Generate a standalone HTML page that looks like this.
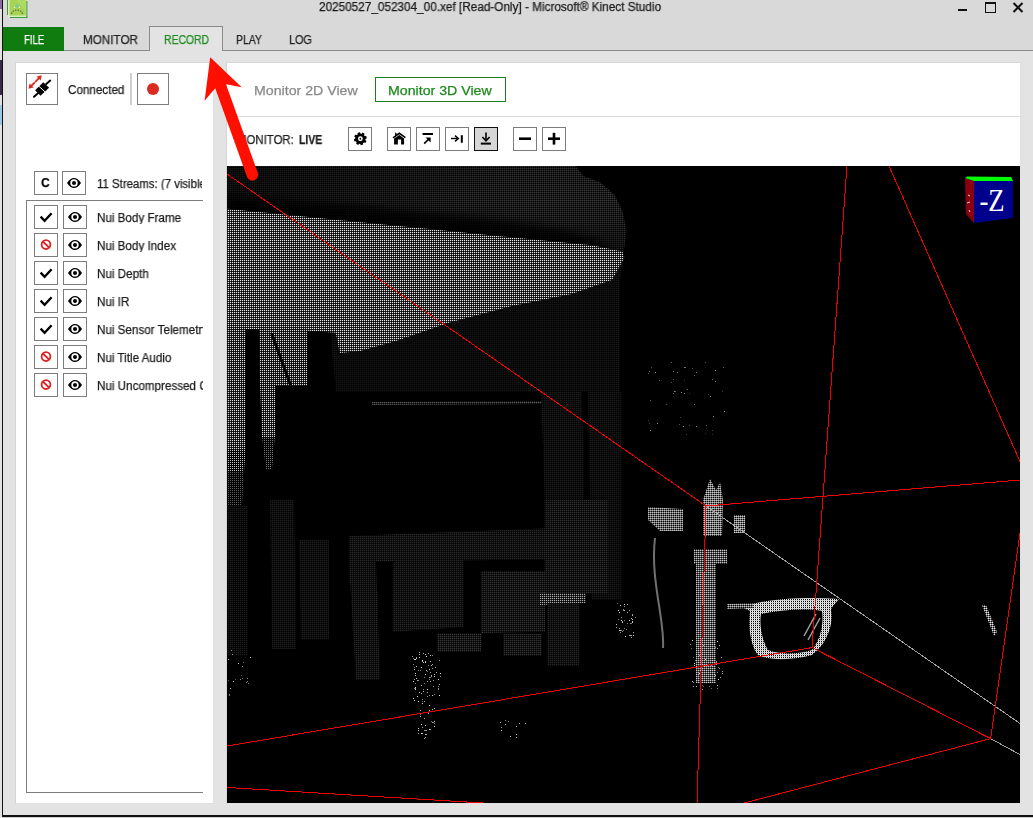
<!DOCTYPE html>
<html><head><meta charset="utf-8">
<style>
*{margin:0;padding:0;box-sizing:border-box}
html,body{width:1033px;height:818px;overflow:hidden;background:#d9d9d9;font-family:"Liberation Sans",sans-serif;position:relative;color:#1b1b1b}
.a{position:absolute}
.t{position:absolute;white-space:nowrap;transform-origin:0 0;line-height:1;will-change:transform;-webkit-text-stroke:0.25px currentColor}
.bx{position:absolute;width:24px;height:24px;border:1px solid #7d7d7d;background:#fff}
</style></head><body>
<!-- desktop strip at far left -->
<div class="a" style="left:0;top:0;width:2px;height:818px;background:#e2e2e2"></div>
<div class="a" style="left:0;top:0;width:2px;height:9px;background:#8a6a9a"></div>
<div class="a" style="left:0;top:60px;width:2px;height:35px;background:#3a2a4a"></div>
<div class="a" style="left:0;top:105px;width:2px;height:20px;background:#9cc8e4"></div>
<!-- window border -->
<div class="a" style="left:2px;top:0;width:1px;height:816px;background:#111"></div>
<div class="a" style="left:2px;top:815px;width:1031px;height:2px;background:#111"></div>
<div class="a" style="left:3px;top:817px;width:1030px;height:1px;background:#d0d0d0"></div>

<!-- app icon -->
<svg class="a" style="left:4px;top:0" width="26" height="20" viewBox="0 0 26 20">
<rect x="3" y="-1" width="1.2" height="16" fill="#3e9a3a"/>
<rect x="22.2" y="1" width="1.2" height="17" fill="#3e9a3a"/>
<rect x="6" y="16.8" width="17.4" height="1.2" fill="#3e9a3a"/>
<rect x="4.2" y="-1" width="18" height="17.8" fill="#e6f4c8"/>
<rect x="5.4" y="-1" width="16.4" height="16.6" fill="#a5d456"/>
<path d="M12 -1 L21.8 -1 L21.8 12 Z" fill="#b6dc6c" opacity="0.6"/>
<circle cx="13" cy="5.8" r="1.2" fill="none" stroke="#5ac8c8" stroke-width="0.9"/>
<circle cx="10.4" cy="7.4" r="0.6" fill="#f0fff0"/><circle cx="15.5" cy="7.4" r="0.6" fill="#f0fff0"/>
<path d="M7.5 14 C8 11 10.5 10.2 13 10.2 C15.5 10.2 18 11 18.6 14" stroke="#6a6a3a" stroke-width="1.3" fill="none" stroke-dasharray="1.4 1.2"/>
</svg>

<!-- title -->
<div class="t" id="title" style="left:318.5px;top:1px;font-size:12px;color:#1a1a1a;transform:scaleX(0.98)">20250527_052304_00.xef [Read-Only] - Microsoft® Kinect Studio</div>

<!-- window controls -->
<div class="a" style="left:958px;top:9px;width:9px;height:2px;background:#111"></div>
<div class="a" style="left:985px;top:2px;width:11px;height:11px;border:1.5px solid #111;border-top-width:2.5px"></div>
<svg class="a" style="left:1012px;top:2px" width="12" height="11" viewBox="0 0 12 11"><path d="M1.5 1 L10.5 10 M10.5 1 L1.5 10" stroke="#111" stroke-width="2" fill="none"/></svg>

<!-- tabs -->
<div class="a" style="left:3px;top:50px;width:1030px;height:1px;background:#8a8a8a"></div>
<div class="a" style="left:3px;top:27px;width:61px;height:24px;background:#107c10"></div>
<div class="a" style="left:149px;top:26px;width:74px;height:25px;background:#e3e3e3;border:1px solid #8a8a8a;border-bottom:none"></div>
<div class="t" id="tfile" style="left:23.5px;top:34.2px;font-size:12px;color:#fff;transform:scaleX(0.8)">FILE</div>
<div class="t" id="tmon" style="left:82.6px;top:34.2px;font-size:12px;color:#222;transform:scaleX(0.973)">MONITOR</div>
<div class="t" id="trec" style="left:163.7px;top:34.2px;font-size:12px;color:#1e8a1e;transform:scaleX(0.867)">RECORD</div>
<div class="t" id="tplay" style="left:235.9px;top:34.2px;font-size:12px;color:#222;transform:scaleX(0.87)">PLAY</div>
<div class="t" id="tlog" style="left:288.9px;top:34.2px;font-size:12px;color:#222;transform:scaleX(0.9)">LOG</div>

<!-- content background -->
<div class="a" style="left:3px;top:51px;width:1030px;height:764px;background:#e3e3e3"></div>

<!-- left panel -->
<div class="a" style="left:15px;top:62px;width:199px;height:742px;background:#fff;border:1px solid #d6d6d6;border-right-color:#e0e0e0;border-bottom-color:#e0e0e0"></div>
<div class="a" style="left:26px;top:73px;width:32px;height:32px;border:1px solid #7d7d7d"></div>
<div class="t" id="tconn" style="left:68px;top:84.2px;font-size:12px;transform:scaleX(0.972)">Connected</div>
<div class="a" style="left:130px;top:73px;width:2px;height:32px;background:#cfcfcf"></div>
<div class="a" style="left:137px;top:73px;width:32px;height:32px;border:1px solid #7d7d7d"></div>
<div class="a" style="left:147px;top:83px;width:12px;height:12px;border-radius:50%;background:#dc2a20"></div>

<div class="bx" style="left:34px;top:171px"><div class="t" style="left:6.3px;top:4.2px;font-size:13.5px;font-weight:bold;color:#000;transform:scaleX(0.9)">C</div></div>
<div class="bx" style="left:62px;top:171px"><svg width="24" height="24" class="a" style="left:-1px;top:-1px"><path d="M5 11.9 C7.3 8.6 9.4 6.9 12 6.9 C14.6 6.9 16.7 8.6 19 11.9 C16.7 15.2 14.6 16.9 12 16.9 C9.4 16.9 7.3 15.2 5 11.9Z" fill="#000"/><circle cx="12" cy="11.9" r="3.7" fill="#fff"/><circle cx="12" cy="11.9" r="2" fill="#000"/></svg></div>
<div class="t" id="tstreams" style="left:97px;top:178.3px;font-size:12px;width:111px;overflow:hidden;transform:scaleX(0.95)">11 Streams: (7 visible)</div>

<!-- list box -->
<div class="a" style="left:26px;top:200px;width:177px;height:593px;border:1px solid #7d7d7d;border-right:none"></div>

<div class="bx" style="left:34px;top:205px"><svg width="24" height="24" class="a" style="left:-1px;top:-1px"><path d="M6.6 11.6 L10.6 15.8 L17.6 8.2" stroke="#000" stroke-width="2.3" fill="none" stroke-linecap="butt"/></svg></div>
<div class="bx" style="left:63px;top:205px"><svg width="24" height="24" class="a" style="left:-1px;top:-1px"><path d="M5 11.9 C7.3 8.6 9.4 6.9 12 6.9 C14.6 6.9 16.7 8.6 19 11.9 C16.7 15.2 14.6 16.9 12 16.9 C9.4 16.9 7.3 15.2 5 11.9Z" fill="#000"/><circle cx="12" cy="11.9" r="3.7" fill="#fff"/><circle cx="12" cy="11.9" r="2" fill="#000"/></svg></div>
<div class="t rl" id="r0" style="left:97px;top:212px;font-size:12px;width:109px;overflow:hidden;transform:scaleX(0.97)">Nui Body Frame</div>
<div class="bx" style="left:34px;top:233px"><svg width="24" height="24" class="a" style="left:-1px;top:-1px"><circle cx="12" cy="11.6" r="4.4" stroke="#dc2424" stroke-width="1.8" fill="none"/><path d="M8.9 8.5 L15.1 14.7" stroke="#dc2424" stroke-width="1.8"/></svg></div>
<div class="bx" style="left:63px;top:233px"><svg width="24" height="24" class="a" style="left:-1px;top:-1px"><path d="M5 11.9 C7.3 8.6 9.4 6.9 12 6.9 C14.6 6.9 16.7 8.6 19 11.9 C16.7 15.2 14.6 16.9 12 16.9 C9.4 16.9 7.3 15.2 5 11.9Z" fill="#000"/><circle cx="12" cy="11.9" r="3.7" fill="#fff"/><circle cx="12" cy="11.9" r="2" fill="#000"/></svg></div>
<div class="t rl" id="r1" style="left:97px;top:240px;font-size:12px;width:109px;overflow:hidden;transform:scaleX(0.97)">Nui Body Index</div>
<div class="bx" style="left:34px;top:261px"><svg width="24" height="24" class="a" style="left:-1px;top:-1px"><path d="M6.6 11.6 L10.6 15.8 L17.6 8.2" stroke="#000" stroke-width="2.3" fill="none" stroke-linecap="butt"/></svg></div>
<div class="bx" style="left:63px;top:261px"><svg width="24" height="24" class="a" style="left:-1px;top:-1px"><path d="M5 11.9 C7.3 8.6 9.4 6.9 12 6.9 C14.6 6.9 16.7 8.6 19 11.9 C16.7 15.2 14.6 16.9 12 16.9 C9.4 16.9 7.3 15.2 5 11.9Z" fill="#000"/><circle cx="12" cy="11.9" r="3.7" fill="#fff"/><circle cx="12" cy="11.9" r="2" fill="#000"/></svg></div>
<div class="t rl" id="r2" style="left:97px;top:268px;font-size:12px;width:109px;overflow:hidden;transform:scaleX(0.97)">Nui Depth</div>
<div class="bx" style="left:34px;top:289px"><svg width="24" height="24" class="a" style="left:-1px;top:-1px"><path d="M6.6 11.6 L10.6 15.8 L17.6 8.2" stroke="#000" stroke-width="2.3" fill="none" stroke-linecap="butt"/></svg></div>
<div class="bx" style="left:63px;top:289px"><svg width="24" height="24" class="a" style="left:-1px;top:-1px"><path d="M5 11.9 C7.3 8.6 9.4 6.9 12 6.9 C14.6 6.9 16.7 8.6 19 11.9 C16.7 15.2 14.6 16.9 12 16.9 C9.4 16.9 7.3 15.2 5 11.9Z" fill="#000"/><circle cx="12" cy="11.9" r="3.7" fill="#fff"/><circle cx="12" cy="11.9" r="2" fill="#000"/></svg></div>
<div class="t rl" id="r3" style="left:97px;top:296px;font-size:12px;width:109px;overflow:hidden;transform:scaleX(0.97)">Nui IR</div>
<div class="bx" style="left:34px;top:317px"><svg width="24" height="24" class="a" style="left:-1px;top:-1px"><path d="M6.6 11.6 L10.6 15.8 L17.6 8.2" stroke="#000" stroke-width="2.3" fill="none" stroke-linecap="butt"/></svg></div>
<div class="bx" style="left:63px;top:317px"><svg width="24" height="24" class="a" style="left:-1px;top:-1px"><path d="M5 11.9 C7.3 8.6 9.4 6.9 12 6.9 C14.6 6.9 16.7 8.6 19 11.9 C16.7 15.2 14.6 16.9 12 16.9 C9.4 16.9 7.3 15.2 5 11.9Z" fill="#000"/><circle cx="12" cy="11.9" r="3.7" fill="#fff"/><circle cx="12" cy="11.9" r="2" fill="#000"/></svg></div>
<div class="t rl" id="r4" style="left:97px;top:324px;font-size:12px;width:109px;overflow:hidden;transform:scaleX(0.97)">Nui Sensor Telemetry</div>
<div class="bx" style="left:34px;top:345px"><svg width="24" height="24" class="a" style="left:-1px;top:-1px"><circle cx="12" cy="11.6" r="4.4" stroke="#dc2424" stroke-width="1.8" fill="none"/><path d="M8.9 8.5 L15.1 14.7" stroke="#dc2424" stroke-width="1.8"/></svg></div>
<div class="bx" style="left:63px;top:345px"><svg width="24" height="24" class="a" style="left:-1px;top:-1px"><path d="M5 11.9 C7.3 8.6 9.4 6.9 12 6.9 C14.6 6.9 16.7 8.6 19 11.9 C16.7 15.2 14.6 16.9 12 16.9 C9.4 16.9 7.3 15.2 5 11.9Z" fill="#000"/><circle cx="12" cy="11.9" r="3.7" fill="#fff"/><circle cx="12" cy="11.9" r="2" fill="#000"/></svg></div>
<div class="t rl" id="r5" style="left:97px;top:352px;font-size:12px;width:109px;overflow:hidden;transform:scaleX(0.97)">Nui Title Audio</div>
<div class="bx" style="left:34px;top:373px"><svg width="24" height="24" class="a" style="left:-1px;top:-1px"><circle cx="12" cy="11.6" r="4.4" stroke="#dc2424" stroke-width="1.8" fill="none"/><path d="M8.9 8.5 L15.1 14.7" stroke="#dc2424" stroke-width="1.8"/></svg></div>
<div class="bx" style="left:63px;top:373px"><svg width="24" height="24" class="a" style="left:-1px;top:-1px"><path d="M5 11.9 C7.3 8.6 9.4 6.9 12 6.9 C14.6 6.9 16.7 8.6 19 11.9 C16.7 15.2 14.6 16.9 12 16.9 C9.4 16.9 7.3 15.2 5 11.9Z" fill="#000"/><circle cx="12" cy="11.9" r="3.7" fill="#fff"/><circle cx="12" cy="11.9" r="2" fill="#000"/></svg></div>
<div class="t rl" id="r6" style="left:97px;top:380px;font-size:12px;width:109px;overflow:hidden;transform:scaleX(0.97)">Nui Uncompressed Color</div>

<!-- right panel -->
<div class="a" style="left:226px;top:62px;width:795px;height:742px;background:#fff;border:1px solid #d6d6d6;border-right-color:#e0e0e0;border-bottom-color:#e0e0e0"></div>
<div class="a" style="left:227px;top:116px;width:793px;height:1px;background:#dcdcdc"></div>
<div class="t" id="t2d" style="left:253.7px;top:84px;font-size:13.5px;color:#8a8a8a;transform:scaleX(1.05)">Monitor 2D View</div>
<div class="a" style="left:375px;top:77px;width:131px;height:25px;border:1px solid #1e7e1e"></div>
<div class="t" id="t3d" style="left:387.8px;top:84px;font-size:13.5px;color:#1e8a1e;transform:scaleX(1.05)">Monitor 3D View</div>
<div class="t" id="tmonl" style="left:237.1px;top:134.1px;font-size:12px;transform:scaleX(0.95)">MONITOR:</div>
<div class="t" id="tlive" style="left:299px;top:134.1px;font-size:12px;font-weight:bold;transform:scaleX(0.867)">LIVE</div>

<div class="bx" style="left:348px;top:127px"><svg width="24" height="24" class="a" style="left:-1px;top:-1px"><path d="M16.52 9.18 L18.20 8.91 L18.83 11.28 L17.25 11.89 L17.12 12.88 L18.49 13.88 L17.26 16.00 L15.72 15.31 L14.92 15.92 L15.19 17.60 L12.82 18.23 L12.21 16.65 L11.22 16.52 L10.22 17.89 L8.10 16.66 L8.79 15.12 L8.18 14.32 L6.50 14.59 L5.87 12.22 L7.45 11.61 L7.58 10.62 L6.21 9.62 L7.44 7.50 L8.98 8.19 L9.78 7.58 L9.51 5.90 L11.88 5.27 L12.49 6.85 L13.48 6.98 L14.48 5.61 L16.60 6.84 L15.91 8.38Z" fill="#000"/><circle cx="12.35" cy="11.75" r="5.0" fill="#000"/><circle cx="12.35" cy="11.75" r="2.4" fill="#fff"/><circle cx="12.35" cy="11.75" r="0.9" fill="#000"/></svg></div>
<div class="bx" style="left:387px;top:127px"><svg width="24" height="24" class="a" style="left:-1px;top:-1px"><path d="M6.0 10.9 L12.35 6.3 L18.4 10.7" stroke="#000" stroke-width="1.5" fill="none"/><path d="M8.1 5.6 L9.6 6.2 L9.6 8.2 L8.1 9.2 Z" fill="#000"/><path d="M7.1 11.6 L12.35 8.0 L17.1 11.4 L17.1 17.4 L14.1 17.4 L14.1 12.4 L10.9 12.4 L10.9 17.4 L7.1 17.4 Z" fill="#000"/></svg></div>
<div class="bx" style="left:416px;top:127px"><svg width="24" height="24" class="a" style="left:-1px;top:-1px"><rect x="6.6" y="6.0" width="10.4" height="2.0" fill="#000"/><path d="M8.2 16.6 L13.2 11.6" stroke="#000" stroke-width="1.6"/><path d="M9.6 10.4 L14.6 10.4 L14.6 15.4 Z" fill="#000"/></svg></div>
<div class="bx" style="left:445px;top:127px"><svg width="24" height="24" class="a" style="left:-1px;top:-1px"><path d="M6 11.5 L12.6 11.5" stroke="#000" stroke-width="1.4"/><path d="M10.0 8.6 L13.4 11.5 L10.0 14.4" stroke="#000" stroke-width="1.4" fill="none"/><rect x="15.8" y="8.2" width="2" height="7.6" fill="#000"/></svg></div>
<div class="bx" style="left:474px;top:127px;background:#d6d6d6;border:1.5px solid #111"><svg width="24" height="24" class="a" style="left:-1.5px;top:-1.5px"><path d="M12 5.4 L12 12.8" stroke="#000" stroke-width="1.6"/><path d="M8.4 10.0 L12 13.8 L15.6 10.0" stroke="#000" stroke-width="1.6" fill="none"/><rect x="6.8" y="15.6" width="10.2" height="2.0" fill="#000"/></svg></div>
<div class="bx" style="left:513px;top:127px"><svg width="24" height="24" class="a" style="left:-1px;top:-1px"><rect x="6" y="10.4" width="12" height="2.6" fill="#000"/></svg></div>
<div class="bx" style="left:542px;top:127px"><svg width="24" height="24" class="a" style="left:-1px;top:-1px"><rect x="6" y="10.4" width="12" height="2.6" fill="#000"/><rect x="10.7" y="5.8" width="2.6" height="11.8" fill="#000"/></svg></div>

<svg class="a" style="left:0;top:0" width="1033" height="818" viewBox="0 0 1033 818" pointer-events="none">
<g fill="#000" stroke="none">
<path d="M43.3 82.3 L49.1 87.7 L40.5 95.8 L35.1 90.2 Z"/>
</g>
<path d="M38.6 86.0 L45.4 92.2" stroke="#fff" stroke-width="1"/>
<path d="M46.0 84.2 L50.2 80.6 M38.2 93.0 L34.0 96.8" stroke="#000" stroke-width="2" stroke-linecap="round"/>
<path d="M30.8 86.4 L34.2 83.0 M35.6 81.6 L39.0 78.2" stroke="#dc2a20" stroke-width="1.8" stroke-linecap="round"/>
<path d="M28.4 88.8 L29.6 83.6 L33.6 87.6 Z M41.8 75.3 L36.6 76.5 L40.6 80.5 Z" fill="#dc2a20"/>
</svg>
<!-- viewport -->
<div class="a" style="left:227px;top:166px;width:793px;height:637px;background:#000;overflow:hidden">
<svg id="vp" width="793" height="637" viewBox="227 166 793 637" style="display:block">
<!--VP-->
<defs><pattern id="p28_62" width="2" height="2" patternUnits="userSpaceOnUse"><rect x="0" y="0" width="1" height="1" fill="#3e3e3e"/><rect x="1" y="0" width="1" height="1" fill="#1c1c1c"/><rect x="0" y="1" width="1" height="1" fill="#161616"/></pattern><pattern id="p10_22" width="2" height="2" patternUnits="userSpaceOnUse"><rect x="0" y="0" width="1" height="1" fill="#161616"/><rect x="1" y="0" width="1" height="1" fill="#0a0a0a"/><rect x="0" y="1" width="1" height="1" fill="#080808"/></pattern><pattern id="p11_24" width="2" height="2" patternUnits="userSpaceOnUse"><rect x="0" y="0" width="1" height="1" fill="#181818"/><rect x="1" y="0" width="1" height="1" fill="#0b0b0b"/><rect x="0" y="1" width="1" height="1" fill="#090909"/></pattern><pattern id="p80_230" width="2" height="2" patternUnits="userSpaceOnUse"><rect x="0" y="0" width="1" height="1" fill="#e6e6e6"/><rect x="1" y="0" width="1" height="1" fill="#323232"/><rect x="0" y="1" width="1" height="1" fill="#282828"/></pattern><pattern id="p72_220" width="2" height="2" patternUnits="userSpaceOnUse"><rect x="0" y="0" width="1" height="1" fill="#dcdcdc"/><rect x="1" y="0" width="1" height="1" fill="#252525"/><rect x="0" y="1" width="1" height="1" fill="#1f1f1f"/></pattern><pattern id="p50_200" width="2" height="2" patternUnits="userSpaceOnUse"><rect x="0" y="0" width="1" height="1" fill="#c8c8c8"/><rect x="1" y="0" width="1" height="1" fill="#000000"/><rect x="0" y="1" width="1" height="1" fill="#000000"/></pattern><pattern id="p24_96" width="2" height="2" patternUnits="userSpaceOnUse"><rect x="0" y="0" width="1" height="1" fill="#606060"/><rect x="1" y="0" width="1" height="1" fill="#000000"/><rect x="0" y="1" width="1" height="1" fill="#000000"/></pattern><pattern id="p12_30" width="2" height="2" patternUnits="userSpaceOnUse"><rect x="0" y="0" width="1" height="1" fill="#1e1e1e"/><rect x="1" y="0" width="1" height="1" fill="#0a0a0a"/><rect x="0" y="1" width="1" height="1" fill="#080808"/></pattern><pattern id="p30_120" width="2" height="2" patternUnits="userSpaceOnUse"><rect x="0" y="0" width="1" height="1" fill="#787878"/><rect x="1" y="0" width="1" height="1" fill="#000000"/><rect x="0" y="1" width="1" height="1" fill="#000000"/></pattern><pattern id="p14_30" width="2" height="2" patternUnits="userSpaceOnUse"><rect x="0" y="0" width="1" height="1" fill="#1e1e1e"/><rect x="1" y="0" width="1" height="1" fill="#0e0e0e"/><rect x="0" y="1" width="1" height="1" fill="#0c0c0c"/></pattern><pattern id="p40_88" width="2" height="2" patternUnits="userSpaceOnUse"><rect x="0" y="0" width="1" height="1" fill="#585858"/><rect x="1" y="0" width="1" height="1" fill="#282828"/><rect x="0" y="1" width="1" height="1" fill="#202020"/></pattern><pattern id="p13_31" width="2" height="2" patternUnits="userSpaceOnUse"><rect x="0" y="0" width="1" height="1" fill="#1f1f1f"/><rect x="1" y="0" width="1" height="1" fill="#0c0c0c"/><rect x="0" y="1" width="1" height="1" fill="#090909"/></pattern><pattern id="p12_26" width="2" height="2" patternUnits="userSpaceOnUse"><rect x="0" y="0" width="1" height="1" fill="#1a1a1a"/><rect x="1" y="0" width="1" height="1" fill="#0c0c0c"/><rect x="0" y="1" width="1" height="1" fill="#0a0a0a"/></pattern><pattern id="p19_45" width="2" height="2" patternUnits="userSpaceOnUse"><rect x="0" y="0" width="1" height="1" fill="#2d2d2d"/><rect x="1" y="0" width="1" height="1" fill="#111111"/><rect x="0" y="1" width="1" height="1" fill="#0e0e0e"/></pattern><pattern id="p18_43" width="2" height="2" patternUnits="userSpaceOnUse"><rect x="0" y="0" width="1" height="1" fill="#2b2b2b"/><rect x="1" y="0" width="1" height="1" fill="#101010"/><rect x="0" y="1" width="1" height="1" fill="#0d0d0d"/></pattern><pattern id="p22_52" width="2" height="2" patternUnits="userSpaceOnUse"><rect x="0" y="0" width="1" height="1" fill="#343434"/><rect x="1" y="0" width="1" height="1" fill="#141414"/><rect x="0" y="1" width="1" height="1" fill="#101010"/></pattern><pattern id="p24_57" width="2" height="2" patternUnits="userSpaceOnUse"><rect x="0" y="0" width="1" height="1" fill="#393939"/><rect x="1" y="0" width="1" height="1" fill="#151515"/><rect x="0" y="1" width="1" height="1" fill="#121212"/></pattern><pattern id="p60_170" width="2" height="2" patternUnits="userSpaceOnUse"><rect x="0" y="0" width="1" height="1" fill="#aaaaaa"/><rect x="1" y="0" width="1" height="1" fill="#262626"/><rect x="0" y="1" width="1" height="1" fill="#202020"/></pattern><pattern id="p17_40" width="2" height="2" patternUnits="userSpaceOnUse"><rect x="0" y="0" width="1" height="1" fill="#282828"/><rect x="1" y="0" width="1" height="1" fill="#0f0f0f"/><rect x="0" y="1" width="1" height="1" fill="#0d0d0d"/></pattern><pattern id="p21_50" width="2" height="2" patternUnits="userSpaceOnUse"><rect x="0" y="0" width="1" height="1" fill="#323232"/><rect x="1" y="0" width="1" height="1" fill="#131313"/><rect x="0" y="1" width="1" height="1" fill="#0f0f0f"/></pattern><pattern id="p110_200" width="2" height="2" patternUnits="userSpaceOnUse"><rect x="0" y="0" width="1" height="1" fill="#c8c8c8"/><rect x="1" y="0" width="1" height="1" fill="#848484"/><rect x="0" y="1" width="1" height="1" fill="#6c6c6c"/></pattern><pattern id="p100_190" width="2" height="2" patternUnits="userSpaceOnUse"><rect x="0" y="0" width="1" height="1" fill="#bebebe"/><rect x="1" y="0" width="1" height="1" fill="#747474"/><rect x="0" y="1" width="1" height="1" fill="#5e5e5e"/></pattern><pattern id="p90_200" width="2" height="2" patternUnits="userSpaceOnUse"><rect x="0" y="0" width="1" height="1" fill="#c8c8c8"/><rect x="1" y="0" width="1" height="1" fill="#585858"/><rect x="0" y="1" width="1" height="1" fill="#484848"/></pattern><pattern id="p165_205" width="2" height="2" patternUnits="userSpaceOnUse"><rect x="0" y="0" width="1" height="1" fill="#cdcdcd"/><rect x="1" y="0" width="1" height="1" fill="#cdcdcd"/><rect x="0" y="1" width="1" height="1" fill="#fafafa"/></pattern><pattern id="p100_200" width="2" height="2" patternUnits="userSpaceOnUse"><rect x="0" y="0" width="1" height="1" fill="#c8c8c8"/><rect x="1" y="0" width="1" height="1" fill="#6e6e6e"/><rect x="0" y="1" width="1" height="1" fill="#5a5a5a"/></pattern><pattern id="p120_230" width="2" height="2" patternUnits="userSpaceOnUse"><rect x="0" y="0" width="1" height="1" fill="#e6e6e6"/><rect x="1" y="0" width="1" height="1" fill="#8a8a8a"/><rect x="0" y="1" width="1" height="1" fill="#707070"/></pattern><pattern id="sp" width="4" height="3" patternUnits="userSpaceOnUse"><rect x="1" y="1" width="1" height="1" fill="#d0d0d0"/></pattern><pattern id="sp2" width="6" height="5" patternUnits="userSpaceOnUse"><rect x="2" y="2" width="1" height="1" fill="#909090"/></pattern><linearGradient id="gh" gradientUnits="userSpaceOnUse" x1="226" y1="0" x2="540" y2="0"><stop offset="0" stop-color="#000" stop-opacity="0.6"/><stop offset="1" stop-color="#000" stop-opacity="0"/></linearGradient><linearGradient id="gv" gradientUnits="userSpaceOnUse" x1="0" y1="166" x2="0" y2="236"><stop offset="0" stop-color="#000" stop-opacity="0.15"/><stop offset="0.5" stop-color="#000" stop-opacity="0"/><stop offset="1" stop-color="#000" stop-opacity="0.3"/></linearGradient><filter id="bl" x="-20%" y="-50%" width="140%" height="200%"><feGaussianBlur stdDeviation="5"/></filter><clipPath id="cc"><polygon points="226,166 575.7,166 583.8,176.2 600,182.3 614.3,194.5 622.4,210.7 626.5,231 624.4,247.3 622.4,251.4 592,245.3 510.6,237.2 429.3,229 348,220.9 287,214.8 226,208.7" fill="#fff" /></clipPath></defs>
<polygon points="226,166 575.7,166 583.8,176.2 600,182.3 614.3,194.5 622.4,210.7 626.5,231 624.4,247.3 622.4,251.4 592,245.3 510.6,237.2 429.3,229 348,220.9 287,214.8 226,208.7" fill="url(#p28_62)" />
<polygon points="226,166 575.7,166 583.8,176.2 600,182.3 614.3,194.5 622.4,210.7 626.5,231 624.4,247.3 622.4,251.4 592,245.3 510.6,237.2 429.3,229 348,220.9 287,214.8 226,208.7" fill="url(#gh)" />
<polygon points="226,166 575.7,166 583.8,176.2 600,182.3 614.3,194.5 622.4,210.7 626.5,231 624.4,247.3 622.4,251.4 592,245.3 510.6,237.2 429.3,229 348,220.9 287,214.8 226,208.7" fill="url(#gv)" />
<g clip-path="url(#cc)"><polygon points="226,196 290,200 350,205 420,212 500,220 560,229 600,240 622.4,256 592,252 510.6,245 429.3,237 348,229 287,223 226,218" fill="#000" opacity="0.85" filter="url(#bl)"/></g>
<polygon points="330,330 624.4,257.5 620,280 620,392 336,392" fill="url(#p10_22)" />
<polygon points="536,300 620,266 620,392 536,392" fill="url(#p11_24)" />
<polygon points="226,208.7 287,214.8 348,220.9 429.3,229 510.6,237.2 592,245.3 622.4,251.4 624.4,257.5 612.3,279.8 571.6,294 510.6,306.3 449.6,322.5 396.8,340.8 360.2,351 339.8,353 335.8,332.7 307.3,330.7 226,328.6" fill="url(#p80_230)" />
<polygon points="226,328 245.6,328 245.6,450 226,450" fill="url(#p72_220)" />
<polygon points="226,450 245.6,450 244,472 226,472" fill="url(#p50_200)" />
<polygon points="226,472 244,472 242,506 226,506" fill="url(#p24_96)" />
<polygon points="226,506 248,506 248,656 226,656" fill="url(#p12_30)" />
<polygon points="259,328 307,328 307,386 275,386 275,437 270,450 262,437 260,386" fill="url(#p72_220)" />
<polygon points="262,437 275,437 272,470 266,470" fill="url(#p30_120)" />
<polygon points="270,333 273,333 292,385 289,385" fill="#000" />
<polygon points="270,500 294,500 296,649 272,649" fill="url(#p14_30)" />
<polygon points="299,540 329,540 329,639 301,639" fill="url(#p14_30)" />
<polygon points="372,402 543,401 543,404 372,405" fill="url(#p40_88)" />
<polygon points="541,392 582,392 586,593 548,593" fill="url(#p13_31)" />
<polygon points="588,392 622,392 622,600 592,600" fill="url(#p12_26)" />
<polygon points="349,536 555,528 556,559 349,562" fill="url(#p19_45)" />
<polygon points="349,562 376,562 380,680 356,680" fill="url(#p18_43)" />
<polygon points="393,560 463,559 463,627 393,632" fill="url(#p18_43)" />
<polygon points="481,571 545,571 545,632 481,633" fill="url(#p22_52)" />
<polygon points="437,633 481,633 481,652 437,652" fill="url(#p24_57)" />
<polygon points="503,634 542,634 542,656 503,656" fill="url(#p22_52)" />
<polygon points="540,593 586,590 586,603 540,605" fill="url(#p60_170)" />
<polygon points="547,603 579,603 579,666 547,666" fill="url(#p17_40)" />
<polygon points="544.7,500 608,500 608,593 544.7,593" fill="url(#p21_50)" />
<rect x="422" y="661" width="1" height="1" fill="#aaaaaa"/><rect x="432" y="655" width="1" height="1" fill="#818181"/><rect x="438" y="686" width="1" height="1" fill="#848484"/><rect x="423" y="689" width="1" height="1" fill="#7f7f7f"/><rect x="428" y="665" width="1" height="1" fill="#7c7c7c"/><rect x="414" y="679" width="1" height="1" fill="#adadad"/><rect x="414" y="667" width="1" height="1" fill="#838383"/><rect x="429" y="679" width="1" height="1" fill="#7f7f7f"/><rect x="438" y="688" width="1" height="1" fill="#878787"/><rect x="419" y="692" width="1" height="1" fill="#c8c8c8"/><rect x="430" y="655" width="1" height="1" fill="#c1c1c1"/><rect x="430" y="677" width="1" height="1" fill="#7e7e7e"/><rect x="419" y="654" width="1" height="1" fill="#bfbfbf"/><rect x="439" y="660" width="1" height="1" fill="#9d9d9d"/><rect x="425" y="661" width="1" height="1" fill="#bdbdbd"/><rect x="415" y="688" width="1" height="1" fill="#9f9f9f"/><rect x="429" y="695" width="1" height="1" fill="#8f8f8f"/><rect x="415" y="689" width="1" height="1" fill="#c1c1c1"/><rect x="432" y="664" width="1" height="1" fill="#a7a7a7"/><rect x="415" y="687" width="1" height="1" fill="#d3d3d3"/><rect x="414" y="688" width="1" height="1" fill="#7f7f7f"/><rect x="431" y="665" width="1" height="1" fill="#b7b7b7"/><rect x="433" y="686" width="1" height="1" fill="#aeaeae"/><rect x="436" y="672" width="1" height="1" fill="#b3b3b3"/><rect x="430" y="681" width="1" height="1" fill="#a6a6a6"/><rect x="421" y="667" width="1" height="1" fill="#dddddd"/><rect x="417" y="696" width="1" height="1" fill="#dbdbdb"/><rect x="419" y="657" width="1" height="1" fill="#c1c1c1"/><rect x="421" y="685" width="1" height="1" fill="#b7b7b7"/><rect x="440" y="673" width="1" height="1" fill="#d5d5d5"/><rect x="426" y="670" width="1" height="1" fill="#c5c5c5"/><rect x="414" y="659" width="1" height="1" fill="#b9b9b9"/><rect x="425" y="662" width="1" height="1" fill="#d8d8d8"/><rect x="422" y="661" width="1" height="1" fill="#b6b6b6"/><rect x="425" y="654" width="1" height="1" fill="#cdcdcd"/><rect x="414" y="700" width="1" height="1" fill="#bfbfbf"/><rect x="430" y="672" width="1" height="1" fill="#a3a3a3"/><rect x="434" y="674" width="1" height="1" fill="#c4c4c4"/><rect x="427" y="689" width="1" height="1" fill="#dedede"/><rect x="426" y="656" width="1" height="1" fill="#e3e3e3"/><rect x="414" y="669" width="1" height="1" fill="#b4b4b4"/><rect x="434" y="694" width="1" height="1" fill="#808080"/><rect x="413" y="698" width="1" height="1" fill="#d1d1d1"/><rect x="421" y="693" width="1" height="1" fill="#c1c1c1"/><rect x="433" y="680" width="1" height="1" fill="#9c9c9c"/><rect x="434" y="676" width="1" height="1" fill="#cdcdcd"/><rect x="423" y="653" width="1" height="1" fill="#b3b3b3"/><rect x="423" y="662" width="1" height="1" fill="#c6c6c6"/><rect x="415" y="683" width="1" height="1" fill="#7f7f7f"/><rect x="418" y="670" width="1" height="1" fill="#888888"/><rect x="435" y="667" width="1" height="1" fill="#aaaaaa"/><rect x="424" y="683" width="1" height="1" fill="#828282"/><rect x="417" y="680" width="1" height="1" fill="#ababab"/><rect x="429" y="669" width="1" height="1" fill="#898989"/><rect x="438" y="679" width="1" height="1" fill="#e6e6e6"/><rect x="429" y="669" width="1" height="1" fill="#d2d2d2"/><rect x="425" y="674" width="1" height="1" fill="#cfcfcf"/><rect x="440" y="676" width="1" height="1" fill="#959595"/><rect x="416" y="657" width="1" height="1" fill="#8e8e8e"/><rect x="416" y="666" width="1" height="1" fill="#cccccc"/><rect x="419" y="652" width="1" height="1" fill="#b6b6b6"/><rect x="438" y="689" width="1" height="1" fill="#8f8f8f"/><rect x="420" y="670" width="1" height="1" fill="#787878"/><rect x="416" y="678" width="1" height="1" fill="#bcbcbc"/><rect x="423" y="691" width="1" height="1" fill="#c0c0c0"/><rect x="422" y="660" width="1" height="1" fill="#d0d0d0"/><rect x="439" y="684" width="1" height="1" fill="#c7c7c7"/><rect x="432" y="695" width="1" height="1" fill="#d6d6d6"/><rect x="413" y="681" width="1" height="1" fill="#dbdbdb"/><rect x="439" y="695" width="1" height="1" fill="#dedede"/><rect x="429" y="677" width="1" height="1" fill="#aaaaaa"/><rect x="424" y="677" width="1" height="1" fill="#858585"/><rect x="427" y="692" width="1" height="1" fill="#ababab"/><rect x="413" y="664" width="1" height="1" fill="#808080"/><rect x="418" y="680" width="1" height="1" fill="#8c8c8c"/><rect x="415" y="673" width="1" height="1" fill="#c4c4c4"/><rect x="413" y="658" width="1" height="1" fill="#787878"/><rect x="430" y="661" width="1" height="1" fill="#bcbcbc"/><rect x="415" y="675" width="1" height="1" fill="#c6c6c6"/><rect x="412" y="656" width="1" height="1" fill="#929292"/><rect x="431" y="676" width="1" height="1" fill="#8b8b8b"/><rect x="432" y="668" width="1" height="1" fill="#a4a4a4"/><rect x="431" y="675" width="1" height="1" fill="#b4b4b4"/><rect x="415" y="659" width="1" height="1" fill="#e4e4e4"/><rect x="427" y="681" width="1" height="1" fill="#b5b5b5"/><rect x="427" y="671" width="1" height="1" fill="#828282"/><rect x="416" y="658" width="1" height="1" fill="#d7d7d7"/><rect x="422" y="699" width="1" height="1" fill="#999999"/><rect x="427" y="696" width="1" height="1" fill="#8c8c8c"/><rect x="428" y="653" width="1" height="1" fill="#929292"/><rect x="434" y="723" width="1" height="1" fill="#8a8a8a"/><rect x="418" y="733" width="1" height="1" fill="#9e9e9e"/><rect x="420" y="716" width="1" height="1" fill="#bababa"/><rect x="429" y="710" width="1" height="1" fill="#a5a5a5"/><rect x="425" y="734" width="1" height="1" fill="#bdbdbd"/><rect x="434" y="721" width="1" height="1" fill="#c9c9c9"/><rect x="425" y="712" width="1" height="1" fill="#dfdfdf"/><rect x="425" y="725" width="1" height="1" fill="#d6d6d6"/><rect x="425" y="712" width="1" height="1" fill="#bababa"/><rect x="433" y="722" width="1" height="1" fill="#d5d5d5"/><rect x="418" y="701" width="1" height="1" fill="#dddddd"/><rect x="426" y="730" width="1" height="1" fill="#999999"/><rect x="424" y="738" width="1" height="1" fill="#a4a4a4"/><rect x="432" y="722" width="1" height="1" fill="#a6a6a6"/><rect x="420" y="714" width="1" height="1" fill="#858585"/><rect x="425" y="730" width="1" height="1" fill="#919191"/><rect x="428" y="713" width="1" height="1" fill="#b5b5b5"/><rect x="418" y="730" width="1" height="1" fill="#cbcbcb"/><rect x="429" y="705" width="1" height="1" fill="#e2e2e2"/><rect x="421" y="724" width="1" height="1" fill="#dcdcdc"/><rect x="424" y="730" width="1" height="1" fill="#8e8e8e"/><rect x="431" y="721" width="1" height="1" fill="#838383"/><rect x="430" y="729" width="1" height="1" fill="#ababab"/><rect x="420" y="710" width="1" height="1" fill="#8d8d8d"/><rect x="422" y="701" width="1" height="1" fill="#8b8b8b"/><rect x="432" y="709" width="1" height="1" fill="#c6c6c6"/><rect x="433" y="722" width="1" height="1" fill="#8b8b8b"/><rect x="422" y="701" width="1" height="1" fill="#797979"/><rect x="421" y="733" width="1" height="1" fill="#d7d7d7"/><rect x="422" y="727" width="1" height="1" fill="#909090"/><rect x="424" y="701" width="1" height="1" fill="#989898"/><rect x="424" y="718" width="1" height="1" fill="#b8b8b8"/><rect x="425" y="737" width="1" height="1" fill="#a1a1a1"/><rect x="426" y="734" width="1" height="1" fill="#adadad"/><rect x="422" y="703" width="1" height="1" fill="#d6d6d6"/><rect x="429" y="729" width="1" height="1" fill="#cccccc"/><rect x="434" y="726" width="1" height="1" fill="#e1e1e1"/><rect x="434" y="708" width="1" height="1" fill="#bcbcbc"/><rect x="422" y="733" width="1" height="1" fill="#b9b9b9"/><rect x="418" y="728" width="1" height="1" fill="#dbdbdb"/><rect x="505" y="720" width="1" height="1" fill="#8b8b8b"/><rect x="505" y="724" width="1" height="1" fill="#b4b4b4"/><rect x="519" y="723" width="1" height="1" fill="#bfbfbf"/><rect x="501" y="730" width="1" height="1" fill="#bababa"/><rect x="516" y="737" width="1" height="1" fill="#b5b5b5"/><rect x="525" y="723" width="1" height="1" fill="#bfbfbf"/><rect x="501" y="727" width="1" height="1" fill="#909090"/><rect x="508" y="721" width="1" height="1" fill="#848484"/><rect x="516" y="734" width="1" height="1" fill="#bfbfbf"/><rect x="500" y="722" width="1" height="1" fill="#b0b0b0"/><rect x="510" y="736" width="1" height="1" fill="#c5c5c5"/><rect x="516" y="726" width="1" height="1" fill="#9b9b9b"/>
<rect x="630" y="635" width="1" height="1" fill="#bcbcbc"/><rect x="631" y="635" width="1" height="1" fill="#979797"/><rect x="632" y="619" width="1" height="1" fill="#bfbfbf"/><rect x="622" y="631" width="1" height="1" fill="#898989"/><rect x="629" y="610" width="1" height="1" fill="#aaaaaa"/><rect x="630" y="623" width="1" height="1" fill="#818181"/><rect x="623" y="630" width="1" height="1" fill="#818181"/><rect x="622" y="622" width="1" height="1" fill="#dcdcdc"/><rect x="619" y="612" width="1" height="1" fill="#d3d3d3"/><rect x="627" y="612" width="1" height="1" fill="#989898"/><rect x="620" y="632" width="1" height="1" fill="#949494"/><rect x="619" y="628" width="1" height="1" fill="#b6b6b6"/><rect x="621" y="617" width="1" height="1" fill="#8c8c8c"/><rect x="629" y="635" width="1" height="1" fill="#ababab"/><rect x="626" y="629" width="1" height="1" fill="#919191"/><rect x="627" y="623" width="1" height="1" fill="#838383"/><rect x="627" y="604" width="1" height="1" fill="#a3a3a3"/><rect x="633" y="632" width="1" height="1" fill="#b0b0b0"/><rect x="616" y="627" width="1" height="1" fill="#a2a2a2"/><rect x="632" y="621" width="1" height="1" fill="#b9b9b9"/><rect x="618" y="610" width="1" height="1" fill="#dcdcdc"/><rect x="623" y="609" width="1" height="1" fill="#828282"/><rect x="624" y="620" width="1" height="1" fill="#7d7d7d"/><rect x="621" y="620" width="1" height="1" fill="#d8d8d8"/><rect x="620" y="630" width="1" height="1" fill="#cecece"/><rect x="624" y="628" width="1" height="1" fill="#8b8b8b"/><rect x="633" y="635" width="1" height="1" fill="#c1c1c1"/><rect x="631" y="623" width="1" height="1" fill="#838383"/><rect x="624" y="606" width="1" height="1" fill="#d0d0d0"/><rect x="621" y="630" width="1" height="1" fill="#818181"/><rect x="624" y="604" width="1" height="1" fill="#c9c9c9"/><rect x="618" y="619" width="1" height="1" fill="#828282"/><rect x="635" y="617" width="1" height="1" fill="#808080"/><rect x="624" y="610" width="1" height="1" fill="#b2b2b2"/><rect x="616" y="624" width="1" height="1" fill="#bebebe"/><rect x="629" y="620" width="1" height="1" fill="#c7c7c7"/><rect x="620" y="605" width="1" height="1" fill="#bbbbbb"/><rect x="623" y="610" width="1" height="1" fill="#8c8c8c"/><rect x="624" y="606" width="1" height="1" fill="#8f8f8f"/><rect x="622" y="622" width="1" height="1" fill="#c8c8c8"/><rect x="625" y="636" width="1" height="1" fill="#d9d9d9"/><rect x="622" y="621" width="1" height="1" fill="#b1b1b1"/><rect x="632" y="614" width="1" height="1" fill="#9a9a9a"/><rect x="627" y="604" width="1" height="1" fill="#989898"/><rect x="617" y="603" width="1" height="1" fill="#7a7a7a"/><rect x="632" y="615" width="1" height="1" fill="#b9b9b9"/><rect x="631" y="618" width="1" height="1" fill="#b1b1b1"/><rect x="619" y="630" width="1" height="1" fill="#cccccc"/><rect x="631" y="637" width="1" height="1" fill="#aaaaaa"/><rect x="632" y="622" width="1" height="1" fill="#d0d0d0"/>
<rect x="675" y="391" width="1" height="1" fill="#5d5d5d"/><rect x="673" y="379" width="1" height="1" fill="#656565"/><rect x="692" y="368" width="1" height="1" fill="#424242"/><rect x="649" y="371" width="1" height="1" fill="#828282"/><rect x="680" y="417" width="1" height="1" fill="#464646"/><rect x="655" y="372" width="1" height="1" fill="#878787"/><rect x="696" y="426" width="1" height="1" fill="#878787"/><rect x="684" y="393" width="1" height="1" fill="#8a8a8a"/><rect x="685" y="367" width="1" height="1" fill="#6c6c6c"/><rect x="671" y="382" width="1" height="1" fill="#545454"/><rect x="705" y="362" width="1" height="1" fill="#535353"/><rect x="694" y="404" width="1" height="1" fill="#787878"/><rect x="689" y="393" width="1" height="1" fill="#363636"/><rect x="687" y="389" width="1" height="1" fill="#5f5f5f"/><rect x="671" y="362" width="1" height="1" fill="#5c5c5c"/><rect x="696" y="372" width="1" height="1" fill="#6e6e6e"/><rect x="683" y="426" width="1" height="1" fill="#858585"/><rect x="673" y="393" width="1" height="1" fill="#727272"/><rect x="648" y="373" width="1" height="1" fill="#535353"/><rect x="659" y="380" width="1" height="1" fill="#656565"/><rect x="723" y="367" width="1" height="1" fill="#646464"/><rect x="650" y="400" width="1" height="1" fill="#585858"/><rect x="677" y="372" width="1" height="1" fill="#7c7c7c"/><rect x="715" y="381" width="1" height="1" fill="#868686"/><rect x="724" y="411" width="1" height="1" fill="#939393"/><rect x="689" y="425" width="1" height="1" fill="#454545"/><rect x="684" y="380" width="1" height="1" fill="#373737"/><rect x="713" y="416" width="1" height="1" fill="#8f8f8f"/><rect x="712" y="379" width="1" height="1" fill="#757575"/><rect x="712" y="434" width="1" height="1" fill="#343434"/><rect x="722" y="391" width="1" height="1" fill="#3c3c3c"/><rect x="651" y="367" width="1" height="1" fill="#434343"/><rect x="694" y="375" width="1" height="1" fill="#626262"/><rect x="705" y="433" width="1" height="1" fill="#383838"/><rect x="650" y="430" width="1" height="1" fill="#898989"/><rect x="679" y="424" width="1" height="1" fill="#535353"/><rect x="648" y="420" width="1" height="1" fill="#3a3a3a"/><rect x="712" y="430" width="1" height="1" fill="#3d3d3d"/><rect x="715" y="370" width="1" height="1" fill="#919191"/><rect x="708" y="394" width="1" height="1" fill="#3b3b3b"/><rect x="681" y="392" width="1" height="1" fill="#8f8f8f"/><rect x="674" y="391" width="1" height="1" fill="#909090"/><rect x="706" y="425" width="1" height="1" fill="#626262"/><rect x="657" y="423" width="1" height="1" fill="#898989"/><rect x="684" y="367" width="1" height="1" fill="#808080"/><rect x="673" y="371" width="1" height="1" fill="#7e7e7e"/><rect x="666" y="404" width="1" height="1" fill="#525252"/><rect x="686" y="434" width="1" height="1" fill="#434343"/><rect x="649" y="423" width="1" height="1" fill="#393939"/><rect x="710" y="396" width="1" height="1" fill="#888888"/>
<rect x="229" y="694" width="1" height="1" fill="#6b6b6b"/><rect x="247" y="681" width="1" height="1" fill="#757575"/><rect x="248" y="683" width="1" height="1" fill="#747474"/><rect x="240" y="679" width="1" height="1" fill="#8b8b8b"/><rect x="250" y="657" width="1" height="1" fill="#c2c2c2"/><rect x="243" y="662" width="1" height="1" fill="#777777"/><rect x="228" y="680" width="1" height="1" fill="#525252"/><rect x="235" y="679" width="1" height="1" fill="#595959"/><rect x="242" y="678" width="1" height="1" fill="#727272"/><rect x="238" y="663" width="1" height="1" fill="#c5c5c5"/><rect x="232" y="654" width="1" height="1" fill="#9a9a9a"/><rect x="228" y="659" width="1" height="1" fill="#afafaf"/><rect x="242" y="666" width="1" height="1" fill="#7e7e7e"/><rect x="230" y="688" width="1" height="1" fill="#b8b8b8"/><rect x="246" y="682" width="1" height="1" fill="#737373"/><rect x="229" y="695" width="1" height="1" fill="#7e7e7e"/><rect x="233" y="681" width="1" height="1" fill="#c2c2c2"/><rect x="241" y="675" width="1" height="1" fill="#535353"/><rect x="231" y="650" width="1" height="1" fill="#8e8e8e"/><rect x="247" y="678" width="1" height="1" fill="#838383"/>
<rect x="709" y="686" width="1" height="1" fill="#767676"/><rect x="716" y="662" width="1" height="1" fill="#949494"/><rect x="710" y="647" width="1" height="1" fill="#cfcfcf"/><rect x="711" y="640" width="1" height="1" fill="#8d8d8d"/><rect x="711" y="665" width="1" height="1" fill="#737373"/><rect x="702" y="685" width="1" height="1" fill="#656565"/><rect x="708" y="656" width="1" height="1" fill="#939393"/><rect x="694" y="665" width="1" height="1" fill="#959595"/><rect x="694" y="663" width="1" height="1" fill="#dadada"/><rect x="717" y="688" width="1" height="1" fill="#878787"/><rect x="693" y="657" width="1" height="1" fill="#717171"/><rect x="693" y="682" width="1" height="1" fill="#888888"/><rect x="699" y="655" width="1" height="1" fill="#868686"/><rect x="717" y="672" width="1" height="1" fill="#8c8c8c"/><rect x="702" y="689" width="1" height="1" fill="#939393"/><rect x="717" y="641" width="1" height="1" fill="#cbcbcb"/><rect x="715" y="675" width="1" height="1" fill="#aaaaaa"/><rect x="703" y="686" width="1" height="1" fill="#6e6e6e"/><rect x="693" y="686" width="1" height="1" fill="#989898"/><rect x="718" y="679" width="1" height="1" fill="#c4c4c4"/><rect x="698" y="681" width="1" height="1" fill="#d3d3d3"/><rect x="708" y="671" width="1" height="1" fill="#6a6a6a"/><rect x="698" y="650" width="1" height="1" fill="#a0a0a0"/><rect x="716" y="661" width="1" height="1" fill="#888888"/><rect x="709" y="656" width="1" height="1" fill="#c2c2c2"/><rect x="706" y="665" width="1" height="1" fill="#b7b7b7"/><rect x="705" y="659" width="1" height="1" fill="#a1a1a1"/><rect x="715" y="647" width="1" height="1" fill="#797979"/><rect x="700" y="644" width="1" height="1" fill="#7e7e7e"/><rect x="722" y="671" width="1" height="1" fill="#aaaaaa"/><rect x="704" y="668" width="1" height="1" fill="#d8d8d8"/><rect x="711" y="688" width="1" height="1" fill="#9d9d9d"/><rect x="717" y="648" width="1" height="1" fill="#aaaaaa"/><rect x="702" y="655" width="1" height="1" fill="#6f6f6f"/><rect x="701" y="661" width="1" height="1" fill="#ababab"/><rect x="695" y="660" width="1" height="1" fill="#828282"/><rect x="713" y="656" width="1" height="1" fill="#cbcbcb"/><rect x="702" y="641" width="1" height="1" fill="#c3c3c3"/><rect x="716" y="664" width="1" height="1" fill="#989898"/><rect x="703" y="664" width="1" height="1" fill="#868686"/><rect x="711" y="688" width="1" height="1" fill="#6b6b6b"/><rect x="721" y="657" width="1" height="1" fill="#adadad"/><rect x="713" y="648" width="1" height="1" fill="#bbbbbb"/><rect x="722" y="673" width="1" height="1" fill="#b4b4b4"/><rect x="703" y="645" width="1" height="1" fill="#868686"/><rect x="705" y="664" width="1" height="1" fill="#979797"/><rect x="718" y="667" width="1" height="1" fill="#8b8b8b"/><rect x="691" y="648" width="1" height="1" fill="#686868"/><rect x="717" y="685" width="1" height="1" fill="#c5c5c5"/><rect x="720" y="677" width="1" height="1" fill="#a2a2a2"/><rect x="690" y="644" width="1" height="1" fill="#969696"/><rect x="719" y="668" width="1" height="1" fill="#838383"/><rect x="696" y="654" width="1" height="1" fill="#777777"/><rect x="699" y="673" width="1" height="1" fill="#bbbbbb"/><rect x="696" y="686" width="1" height="1" fill="#bdbdbd"/><rect x="719" y="645" width="1" height="1" fill="#aaaaaa"/><rect x="692" y="640" width="1" height="1" fill="#c8c8c8"/><rect x="698" y="654" width="1" height="1" fill="#acacac"/><rect x="692" y="681" width="1" height="1" fill="#bfbfbf"/><rect x="709" y="648" width="1" height="1" fill="#b4b4b4"/>
<polygon points="703,500 710,479 716,490 720,482 723,500 722,536 703,536" fill="url(#p110_200)" />
<polygon points="734,515 745,515 745,533 734,533" fill="url(#p110_200)" />
<polygon points="648,507 683,509 683,531 660,531 648,520" fill="url(#p100_190)" />
<path d="M655 538 C650 580 665 620 663 648" stroke="#707070" stroke-width="2" fill="none"/>
<polygon points="694,549 727,549 727,564 716,564 716,683 696,683 696,564 694,564" fill="url(#p90_200)" />
<path d="M742 607 C760 600 800 596 839 599 C836 603 832 606 831 610 C834 625 826 645 812 655 C795 660 770 661 758 655 C750 645 748 625 750 611 Z M761 614 C780 610 805 608 822 611 C824 625 820 640 812 650 C800 654 780 655 768 650 C762 640 759 625 761 614 Z" fill="url(#p165_205)" fill-rule="evenodd"/>
<path d="M804 636 L816 614 M808 640 L820 618" stroke="#a0a0a0" stroke-width="1.5"/>
<polygon points="727,604 753,603 753,608 727,609" fill="url(#p100_200)" />
<polygon points="982,605 986,605 997,632 994,636" fill="url(#p120_230)" />
<line x1="706" y1="506" x2="1020" y2="723.5" stroke="#a0a0a0" stroke-width="1" shape-rendering="crispEdges"/>
<line x1="990.6" y1="738.6" x2="1020" y2="754.6" stroke="#a0a0a0" stroke-width="1" shape-rendering="crispEdges"/>
<line x1="226" y1="173.3" x2="706" y2="506" stroke="#f00000" stroke-width="1" shape-rendering="crispEdges"/>
<line x1="706" y1="506" x2="1020" y2="480" stroke="#f00000" stroke-width="1" shape-rendering="crispEdges"/>
<line x1="706" y1="506" x2="697" y2="803" stroke="#f00000" stroke-width="1" shape-rendering="crispEdges"/>
<line x1="847" y1="166" x2="812" y2="648" stroke="#f00000" stroke-width="1" shape-rendering="crispEdges"/>
<line x1="889" y1="166" x2="1020" y2="461.5" stroke="#f00000" stroke-width="1" shape-rendering="crispEdges"/>
<line x1="226" y1="746.2" x2="812" y2="647.6" stroke="#f00000" stroke-width="1" shape-rendering="crispEdges"/>
<line x1="812" y1="647.6" x2="990.6" y2="738.6" stroke="#f00000" stroke-width="1" shape-rendering="crispEdges"/>
<line x1="990.6" y1="738.6" x2="1020" y2="533" stroke="#f00000" stroke-width="1" shape-rendering="crispEdges"/>
<line x1="990.6" y1="738.6" x2="744" y2="803" stroke="#f00000" stroke-width="1" shape-rendering="crispEdges"/>
<line x1="226" y1="787.4" x2="483" y2="803" stroke="#f00000" stroke-width="1" shape-rendering="crispEdges"/>
<polygon points="965,178 974,181 974,223 966,214" fill="#8a0010"/>
<polygon points="974,181 1013,181 1013,218 974,223" fill="#00008c"/>
<polygon points="967,176.5 1011,177 1013,181 974,181 965,178" fill="#00ff00"/>
<text x="979.5" y="211.5" font-family="Liberation Serif" font-size="31" fill="#fff" transform="translate(979.5 211.5) scale(0.86 1) translate(-979.5 -211.5)">-Z</text>
<path d="M968 195 l2 1 M967 203 l3 -1 M969 210 l1 2" stroke="#f0d0d0" stroke-width="1"/>
<!--/VP-->
</svg>
</div>

<svg class="a" style="left:0;top:0" width="1033" height="818" viewBox="0 0 1033 818">
<path d="M210.2 57.2 L241.7 87.3 L226.3 84.3 L215.0 88.4 L204.6 100.7Z" fill="#fe0f00"/>
<path d="M220.3 85.4 L252.4 174.8" stroke="#fe0f00" stroke-width="11.5" stroke-linecap="round"/>
</svg>
</body></html>
